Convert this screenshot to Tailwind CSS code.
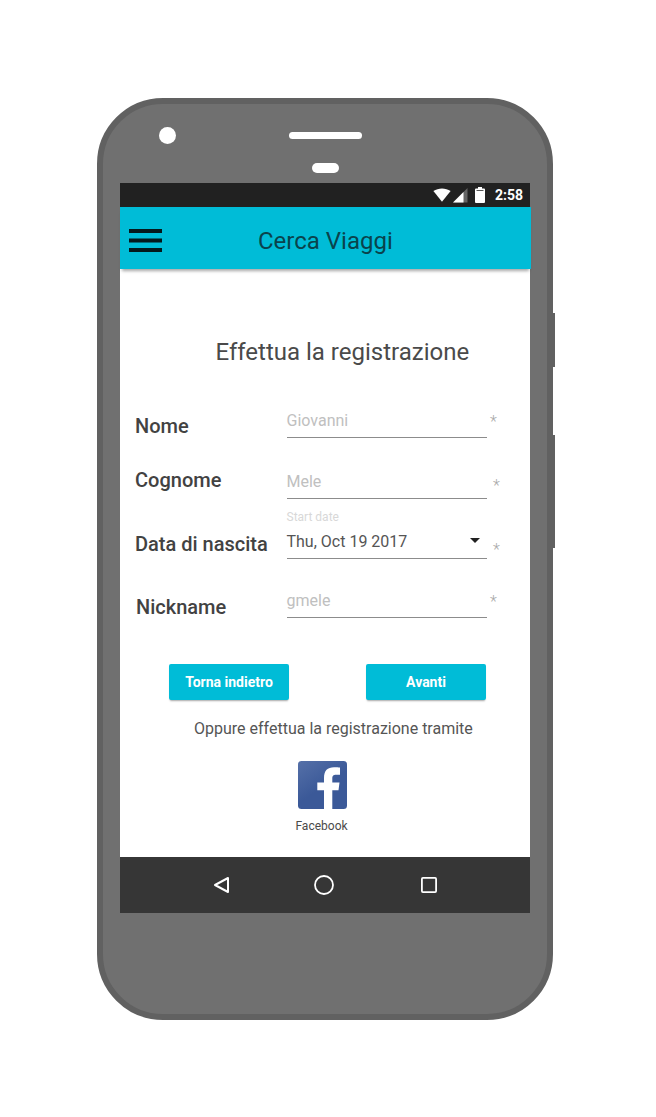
<!DOCTYPE html>
<html lang="it">
<head>
<meta charset="utf-8">
<title>Cerca Viaggi</title>
<script src="https://cdn.jsdelivr.net/npm/@tailwindcss/browser@4"></script>
</head>
<body class="bg-white font-['Roboto',sans-serif] w-[656px] h-[1117px] overflow-hidden pt-[98px] pl-[97px]">
<div class="relative w-[456px] h-[922px] rounded-[66px] border-[6px] border-[#616161] bg-[#707070] flex flex-col">
  <div class="absolute left-[450px] top-[209px] w-[2px] h-[54px] bg-[#616161]"></div>
  <div class="absolute left-[450px] top-[331px] w-[2px] h-[113px] bg-[#616161]"></div>

  <div class="h-[79px] shrink-0 flex">
    <div class="w-[17px] h-[17px] mt-[23px] ml-[56px] rounded-full bg-white"></div>
    <div class="ml-[113px] mt-[28px] w-[73px] flex flex-col items-center">
      <div class="w-[73px] h-[7px] rounded-full bg-white"></div>
      <div class="mt-[24px] w-[27px] h-[10px] rounded-full bg-white"></div>
    </div>
  </div>

  <div class="ml-[17px] w-[410px] h-[730px] shrink-0 bg-white flex flex-col">
    <div class="h-6 shrink-0 bg-[#212121] flex items-center text-white">
      <svg class="ml-[313px] w-[18px] h-[14px]" viewBox="0 0 18 14"><path d="M9 13.7 0.4 3.1C5.400 -.5 12.600 -.5 17.600 3.100z" fill="#fff"/></svg>
      <svg class="ml-[2px] w-[15px] h-[15px]" viewBox="0 0 15 15"><path d="M0 14.500 14.500 0V14.500z" fill="#fff" fill-opacity=".3"/><path d="M0 14.500 10.500 4V14.500z" fill="#fff"/></svg>
      <svg class="ml-[7px] w-[10px] h-[16px]" viewBox="0 0 10 16"><path d="M3 0h4v1.500h2a1 1 0 0 1 1 1V15a1 1 0 0 1-1 1H1a1 1 0 0 1-1-1V2.500a1 1 0 0 1 1-1h2z" fill="#fff"/><path d="M1.500 3.500h7" stroke="#555" stroke-width="1"/></svg>
      <span class="ml-[10px] text-sm font-bold leading-6">2:58</span>
    </div>
    <header class="relative h-[62px] w-[411px] shrink-0 bg-[#00bcd7] shadow-[0_4px_3px_-2px_rgba(0,0,0,0.35)] flex items-center">
      <svg class="ml-[9px] mt-[5px] w-[33px] h-[23px]" viewBox="0 0 33 23"><path d="M0 2h33M0 11.500h33M0 21h33" stroke="#04191c" stroke-width="3.800"/></svg>
      <h1 class="ml-[96px] mt-[5px] text-2xl leading-8 text-[#0a434c]">Cerca Viaggi</h1>
    </header>

    <main class="h-[588px] shrink-0 flex flex-col text-[#424242]">
      <h2 class="mt-[67px] ml-[95.500px] text-2xl leading-8 whitespace-nowrap text-[#4a4a4a]">Effettua la registrazione</h2>
      <form class="mt-8 ml-[15px]">
        <div class="flex h-[38px]">
          <label class="w-[151.500px] mt-[14px] text-xl leading-6 font-medium">Nome</label>
          <div class="w-[200.500px] border-b border-[#8c8c8c] pt-[9px] leading-6 text-[#c0c0c0]">Giovanni</div>
          <span class="ml-[3px] mt-[10px] leading-6 font-light text-[#a8a8a8]">*</span>
        </div>
        <div class="flex h-[61px]">
          <label class="w-[151.500px] mt-[30px] text-xl leading-6 font-medium">Cognome</label>
          <div class="w-[200.500px] border-b border-[#8c8c8c] pt-[32px] leading-6 text-[#c0c0c0]">Mele</div>
          <span class="ml-[6px] mt-[36px] leading-6 font-light text-[#a8a8a8]">*</span>
        </div>
        <div class="flex h-[60px]">
          <label class="w-[151.500px] mt-[33px] text-xl leading-6 font-medium whitespace-nowrap">Data di nascita</label>
          <div class="w-[200.500px] border-b border-[#8c8c8c] pt-[10px]">
            <div class="text-xs leading-4 text-[#d8d8d8]">Start date</div>
            <div class="flex mt-[5px] leading-6 items-center justify-between pr-[7.500px] text-[#555]"><span>Thu, Oct 19 2017</span>
              <svg class="w-[10px] h-[5px] -mt-[4px]" viewBox="0 0 10 5"><path d="M0 0h10L5 5z" fill="#212121"/></svg></div>
          </div>
          <span class="ml-[6px] mt-[39px] leading-6 font-light text-[#a8a8a8]">*</span>
        </div>
        <div class="flex h-[59px]">
          <label class="w-[151.500px] pl-px mt-[36px] text-xl leading-6 font-medium">Nickname</label>
          <div class="w-[200.500px] border-b border-[#8c8c8c] pt-[30px] leading-6 text-[#c0c0c0]">gmele</div>
          <span class="ml-[3px] mt-[31px] leading-6 font-light text-[#a8a8a8]">*</span>
        </div>
      </form>
      <div class="mt-[46px] ml-[49px] flex gap-[77px] text-sm font-bold text-white">
        <button class="w-[120px] h-[36px] rounded-[2px] bg-[#00bcd7] shadow-[0_2px_2px_-1px_rgba(0,0,0,0.35)]">Torna indietro</button>
        <button class="w-[120px] h-[36px] rounded-[2px] bg-[#00bcd7] shadow-[0_2px_2px_-1px_rgba(0,0,0,0.35)]">Avanti</button>
      </div>
      <p class="mt-[17px] ml-[74px] leading-6 whitespace-nowrap text-[#555]">Oppure effettua la registrazione tramite</p>
      <div class="mt-[20px] ml-[175px] w-[53px] flex flex-col items-center">
        <svg class="ml-[2px] w-[49px] h-[48px]" viewBox="0 0 49 48"><defs><linearGradient id="fb" x1="0" y1="0" x2=".7" y2="1"><stop offset="0" stop-color="#5570a8"/><stop offset=".6" stop-color="#3b5998"/></linearGradient></defs><rect width="49" height="48" rx="3.500" fill="url(#fb)"/><path d="M26 48V29.300H19.300V21.500H26V17C26 9.500 29.500 6.200 36 6.200c2.600 0 4.600.1 6 .4V13.700h-3.700c-3.300 0-4 1.500-4 3.800v4h7.200l-1 7.800h-6.200V48z" fill="#fff"/></svg>
        <span class="mt-[9px] text-xs leading-4 text-[#4a4a4a]">Facebook</span>
      </div>
    </main>

    <nav class="h-[56px] shrink-0 bg-[#363636] flex items-center">
      <svg class="ml-[93px] w-[17px] h-[18px]" viewBox="0 0 17 18"><path d="M15 2v14L2 9z" fill="none" stroke="#fff" stroke-width="2" stroke-linejoin="round"/></svg>
      <svg class="ml-[84px] w-[20px] h-[20px]" viewBox="0 0 20 20"><circle cx="10" cy="10" r="9" fill="none" stroke="#fff" stroke-width="1.800"/></svg>
      <svg class="ml-[87px] w-[16px] h-[16px]" viewBox="0 0 16 16"><rect x=".9" y=".9" width="14.200" height="14.200" rx="1" fill="none" stroke="#fff" stroke-width="1.800"/></svg>
    </nav>
  </div>
</div>
</body>
</html>
